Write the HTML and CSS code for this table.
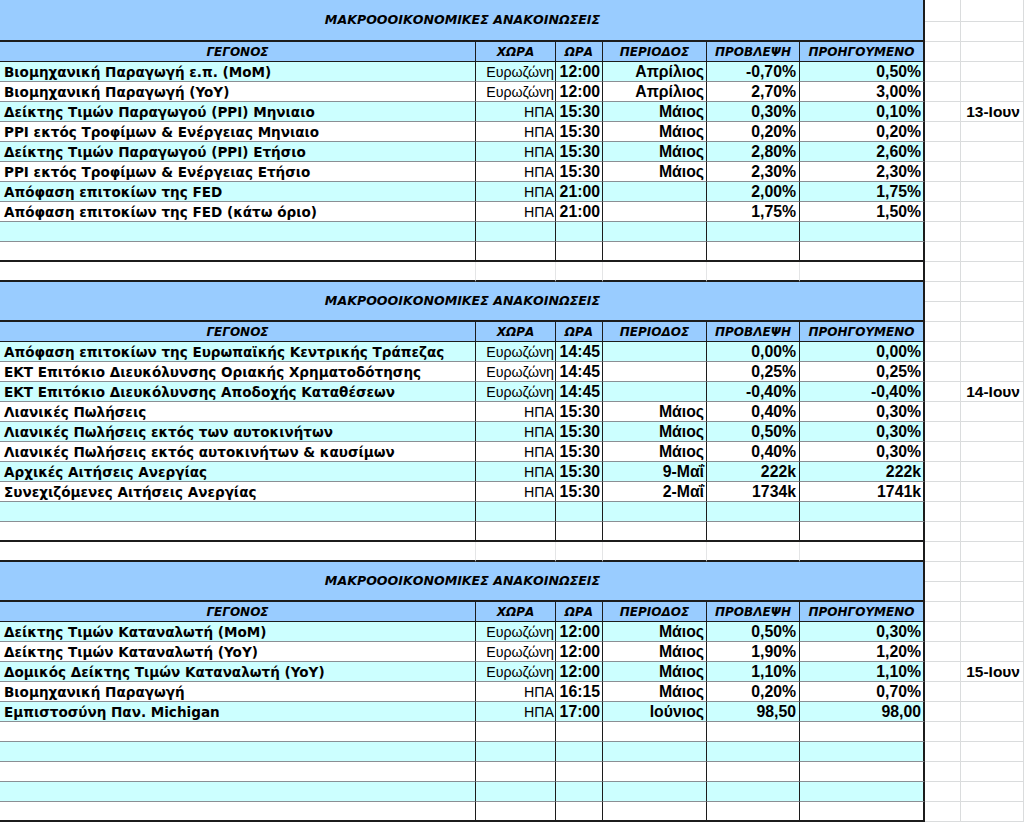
FILE: index.html
```html
<!DOCTYPE html>
<html lang="el">
<head>
<meta charset="utf-8">
<title>Μακροοικονομικές ανακοινώσεις</title>
<link rel="stylesheet" href="styles.css">
</head>
<body>
<table class="sheet">
<colgroup>
<col class="col-a"><col class="col-b"><col class="col-c"><col class="col-d"><col class="col-e"><col class="col-f"><col class="col-g"><col class="col-h">
</colgroup>
<tbody>
<!-- Block 1 -->
<tr class="row-first"><td class="title" colspan="6" rowspan="2">ΜΑΚΡΟΟΟΙΚΟΝΟΜΙΚΕΣ ΑΝΑΚΟΙΝΩΣΕΙΣ</td><td class="g"></td><td class="g"></td></tr>
<tr class="row"><td class="g"></td><td class="g"></td></tr>
<tr class="row head"><th>ΓΕΓΟΝΟΣ</th><th>ΧΩΡΑ</th><th>ΩΡΑ</th><th>ΠΕΡΙΟΔΟΣ</th><th>ΠΡΟΒΛΕΨΗ</th><th class="last">ΠΡΟΗΓΟΥΜΕΝΟ</th><td class="g"></td><td class="g"></td></tr>
<tr class="row cy"><td class="ev">Βιομηχανική Παραγωγή ε.π. (MoM)</td><td class="ct">Ευρωζώνη</td><td class="tm">12:00</td><td class="pr">Απρίλιος</td><td class="fc">-0,70%</td><td class="pv">0,50%</td><td class="g"></td><td class="g"></td></tr>
<tr class="row wh"><td class="ev">Βιομηχανική Παραγωγή (YoY)</td><td class="ct">Ευρωζώνη</td><td class="tm">12:00</td><td class="pr">Απρίλιος</td><td class="fc">2,70%</td><td class="pv">3,00%</td><td class="g"></td><td class="g"></td></tr>
<tr class="row cy"><td class="ev">Δείκτης Τιμών Παραγωγού (PPI) Μηνιαιο</td><td class="ct">ΗΠΑ</td><td class="tm">15:30</td><td class="pr">Μάιος</td><td class="fc">0,30%</td><td class="pv">0,10%</td><td class="g"></td><td class="g date">13-Ιουν</td></tr>
<tr class="row wh"><td class="ev">PPI εκτός Τροφίμων &amp; Ενέργειας Μηνιαιο</td><td class="ct">ΗΠΑ</td><td class="tm">15:30</td><td class="pr">Μάιος</td><td class="fc">0,20%</td><td class="pv">0,20%</td><td class="g"></td><td class="g"></td></tr>
<tr class="row cy"><td class="ev">Δείκτης Τιμών Παραγωγού (PPI) Ετήσιο</td><td class="ct">ΗΠΑ</td><td class="tm">15:30</td><td class="pr">Μάιος</td><td class="fc">2,80%</td><td class="pv">2,60%</td><td class="g"></td><td class="g"></td></tr>
<tr class="row wh"><td class="ev">PPI εκτός Τροφίμων &amp; Ενέργειας Ετήσιο</td><td class="ct">ΗΠΑ</td><td class="tm">15:30</td><td class="pr">Μάιος</td><td class="fc">2,30%</td><td class="pv">2,30%</td><td class="g"></td><td class="g"></td></tr>
<tr class="row cy"><td class="ev">Απόφαση επιτοκίων της FED</td><td class="ct">ΗΠΑ</td><td class="tm">21:00</td><td class="pr"></td><td class="fc">2,00%</td><td class="pv">1,75%</td><td class="g"></td><td class="g"></td></tr>
<tr class="row wh"><td class="ev">Απόφαση επιτοκίων της FED (κάτω όριο)</td><td class="ct">ΗΠΑ</td><td class="tm">21:00</td><td class="pr"></td><td class="fc">1,75%</td><td class="pv">1,50%</td><td class="g"></td><td class="g"></td></tr>
<tr class="row cy"><td class="ev"></td><td class="ct"></td><td class="tm"></td><td class="pr"></td><td class="fc"></td><td class="pv"></td><td class="g"></td><td class="g"></td></tr>
<tr class="row wh end"><td class="ev"></td><td class="ct"></td><td class="tm"></td><td class="pr"></td><td class="fc"></td><td class="pv"></td><td class="g"></td><td class="g"></td></tr>
<tr class="row gap"><td class="gb"></td><td class="gb"></td><td class="gb"></td><td class="gb"></td><td class="gb"></td><td class="gb"></td><td class="g"></td><td class="g"></td></tr>

<!-- Block 2 -->
<tr class="row"><td class="title" colspan="6" rowspan="2">ΜΑΚΡΟΟΟΙΚΟΝΟΜΙΚΕΣ ΑΝΑΚΟΙΝΩΣΕΙΣ</td><td class="g"></td><td class="g"></td></tr>
<tr class="row"><td class="g"></td><td class="g"></td></tr>
<tr class="row head"><th>ΓΕΓΟΝΟΣ</th><th>ΧΩΡΑ</th><th>ΩΡΑ</th><th>ΠΕΡΙΟΔΟΣ</th><th>ΠΡΟΒΛΕΨΗ</th><th class="last">ΠΡΟΗΓΟΥΜΕΝΟ</th><td class="g"></td><td class="g"></td></tr>
<tr class="row cy"><td class="ev">Απόφαση επιτοκίων της Ευρωπαϊκής Κεντρικής Τράπεζας</td><td class="ct">Ευρωζώνη</td><td class="tm">14:45</td><td class="pr"></td><td class="fc">0,00%</td><td class="pv">0,00%</td><td class="g"></td><td class="g"></td></tr>
<tr class="row wh"><td class="ev">ΕΚΤ Επιτόκιο Διευκόλυνσης Οριακής Χρηματοδότησης</td><td class="ct">Ευρωζώνη</td><td class="tm">14:45</td><td class="pr"></td><td class="fc">0,25%</td><td class="pv">0,25%</td><td class="g"></td><td class="g"></td></tr>
<tr class="row cy"><td class="ev">ΕΚΤ Επιτόκιο Διευκόλυνσης Αποδοχής Καταθέσεων</td><td class="ct">Ευρωζώνη</td><td class="tm">14:45</td><td class="pr"></td><td class="fc">-0,40%</td><td class="pv">-0,40%</td><td class="g"></td><td class="g date">14-Ιουν</td></tr>
<tr class="row wh"><td class="ev">Λιανικές Πωλήσεις</td><td class="ct">ΗΠΑ</td><td class="tm">15:30</td><td class="pr">Μάιος</td><td class="fc">0,40%</td><td class="pv">0,30%</td><td class="g"></td><td class="g"></td></tr>
<tr class="row cy"><td class="ev">Λιανικές Πωλήσεις εκτός των αυτοκινήτων</td><td class="ct">ΗΠΑ</td><td class="tm">15:30</td><td class="pr">Μάιος</td><td class="fc">0,50%</td><td class="pv">0,30%</td><td class="g"></td><td class="g"></td></tr>
<tr class="row wh"><td class="ev">Λιανικές Πωλήσεις εκτός αυτοκινήτων &amp; καυσίμων</td><td class="ct">ΗΠΑ</td><td class="tm">15:30</td><td class="pr">Μάιος</td><td class="fc">0,40%</td><td class="pv">0,30%</td><td class="g"></td><td class="g"></td></tr>
<tr class="row cy"><td class="ev">Αρχικές Αιτήσεις Ανεργίας</td><td class="ct">ΗΠΑ</td><td class="tm">15:30</td><td class="pr">9-Μαΐ</td><td class="fc">222k</td><td class="pv">222k</td><td class="g"></td><td class="g"></td></tr>
<tr class="row wh"><td class="ev">Συνεχιζόμενες Αιτήσεις Ανεργίας</td><td class="ct">ΗΠΑ</td><td class="tm">15:30</td><td class="pr">2-Μαΐ</td><td class="fc">1734k</td><td class="pv">1741k</td><td class="g"></td><td class="g"></td></tr>
<tr class="row cy"><td class="ev"></td><td class="ct"></td><td class="tm"></td><td class="pr"></td><td class="fc"></td><td class="pv"></td><td class="g"></td><td class="g"></td></tr>
<tr class="row wh end"><td class="ev"></td><td class="ct"></td><td class="tm"></td><td class="pr"></td><td class="fc"></td><td class="pv"></td><td class="g"></td><td class="g"></td></tr>
<tr class="row gap"><td class="gb"></td><td class="gb"></td><td class="gb"></td><td class="gb"></td><td class="gb"></td><td class="gb"></td><td class="g"></td><td class="g"></td></tr>

<!-- Block 3 -->
<tr class="row"><td class="title" colspan="6" rowspan="2">ΜΑΚΡΟΟΟΙΚΟΝΟΜΙΚΕΣ ΑΝΑΚΟΙΝΩΣΕΙΣ</td><td class="g"></td><td class="g"></td></tr>
<tr class="row"><td class="g"></td><td class="g"></td></tr>
<tr class="row head"><th>ΓΕΓΟΝΟΣ</th><th>ΧΩΡΑ</th><th>ΩΡΑ</th><th>ΠΕΡΙΟΔΟΣ</th><th>ΠΡΟΒΛΕΨΗ</th><th class="last">ΠΡΟΗΓΟΥΜΕΝΟ</th><td class="g"></td><td class="g"></td></tr>
<tr class="row cy"><td class="ev">Δείκτης Τιμών Καταναλωτή (MoM)</td><td class="ct">Ευρωζώνη</td><td class="tm">12:00</td><td class="pr">Μάιος</td><td class="fc">0,50%</td><td class="pv">0,30%</td><td class="g"></td><td class="g"></td></tr>
<tr class="row wh"><td class="ev">Δείκτης Τιμών Καταναλωτή (YoY)</td><td class="ct">Ευρωζώνη</td><td class="tm">12:00</td><td class="pr">Μάιος</td><td class="fc">1,90%</td><td class="pv">1,20%</td><td class="g"></td><td class="g"></td></tr>
<tr class="row cy"><td class="ev">Δομικός Δείκτης Τιμών Καταναλωτή (YoY)</td><td class="ct">Ευρωζώνη</td><td class="tm">12:00</td><td class="pr">Μάιος</td><td class="fc">1,10%</td><td class="pv">1,10%</td><td class="g"></td><td class="g date">15-Ιουν</td></tr>
<tr class="row wh"><td class="ev">Βιομηχανική Παραγωγή</td><td class="ct">ΗΠΑ</td><td class="tm">16:15</td><td class="pr">Μάιος</td><td class="fc">0,20%</td><td class="pv">0,70%</td><td class="g"></td><td class="g"></td></tr>
<tr class="row cy"><td class="ev">Εμπιστοσύνη Παν. Michigan</td><td class="ct">ΗΠΑ</td><td class="tm">17:00</td><td class="pr">Ιούνιος</td><td class="fc">98,50</td><td class="pv">98,00</td><td class="g"></td><td class="g"></td></tr>
<tr class="row wh"><td class="ev"></td><td class="ct"></td><td class="tm"></td><td class="pr"></td><td class="fc"></td><td class="pv"></td><td class="g"></td><td class="g"></td></tr>
<tr class="row cy"><td class="ev"></td><td class="ct"></td><td class="tm"></td><td class="pr"></td><td class="fc"></td><td class="pv"></td><td class="g"></td><td class="g"></td></tr>
<tr class="row wh"><td class="ev"></td><td class="ct"></td><td class="tm"></td><td class="pr"></td><td class="fc"></td><td class="pv"></td><td class="g"></td><td class="g"></td></tr>
<tr class="row cy"><td class="ev"></td><td class="ct"></td><td class="tm"></td><td class="pr"></td><td class="fc"></td><td class="pv"></td><td class="g"></td><td class="g"></td></tr>
<tr class="row wh end"><td class="ev"></td><td class="ct"></td><td class="tm"></td><td class="pr"></td><td class="fc"></td><td class="pv"></td><td class="g"></td><td class="g"></td></tr>
</tbody>
</table>
</body>
</html>
```
FILE: styles.css
```css
html, body {
  margin: 0;
  padding: 0;
  background: #ffffff;
}

.sheet {
  border-collapse: separate;
  border-spacing: 0;
  table-layout: fixed;
  width: 1024px;
  color: #000;
  font-family: "Liberation Sans", Arial, sans-serif;
}

.col-a { width: 476px; }
.col-b { width: 80px; }
.col-c { width: 47px; }
.col-d { width: 104px; }
.col-e { width: 93px; }
.col-f { width: 125px; }
.col-g { width: 36px; }
.col-h { width: 63px; }

.sheet td, .sheet th {
  box-sizing: border-box;
  padding: 0 3px;
  white-space: nowrap;
  overflow: hidden;
  vertical-align: bottom;
  line-height: 18px;
}

.row { height: 20px; }
.row-first { height: 22px; }
.gap { height: 20px; }

/* empty spreadsheet grid cells */
.sheet .g {
  border-right: 1px solid #dadcdd;
  border-bottom: 1px solid #dadcdd;
}
.sheet .gb {
  border-right: 1px solid #e4e5e6;
  border-bottom: 2px solid #1c1c1c;
}
.sheet .gap .gb:nth-child(6) {
  border-right: 2px solid #1c1c1c;
}

.sheet .date {
  text-align: right;
  font-weight: bold;
  font-size: 15.5px;
  padding-right: 3px;
}

/* title */
.sheet .title {
  background: #99ccff;
  border-right: 2px solid #1c1c1c;
  border-bottom: 2px solid #1c1c1c;
  text-align: center;
  vertical-align: middle;
  font-family: "DejaVu Sans", Verdana, sans-serif;
  font-weight: bold;
  font-style: italic;
  font-size: 12.6px;
  padding: 0 0 0 2px;
}

/* header row */
.sheet .head th {
  background: #99ccff;
  border-right: 1px solid #1c1c1c;
  border-bottom: 1px solid #1c1c1c;
  font-family: "DejaVu Sans", Verdana, sans-serif;
  font-weight: bold;
  font-style: italic;
  font-size: 12px;
  text-align: center;
  padding: 0;
}
.sheet .head th.last { border-right: 2px solid #1c1c1c; }

/* data rows */
.cy td:not(.g) { background: #ccffff; }
.wh td:not(.g) { background: #ffffff; }

.sheet .ev, .sheet .ct, .sheet .tm, .sheet .pr, .sheet .fc, .sheet .pv {
  border-right: 1px solid #1c1c1c;
  border-bottom: 1px solid #8a8f94;
}
.sheet .pv { border-right: 2px solid #1c1c1c; }
.sheet .end td:not(.g) { border-bottom: 2px solid #1c1c1c; }

.sheet .ev {
  font-family: "DejaVu Sans", Verdana, sans-serif;
  font-weight: bold;
  font-size: 13.55px;
  padding-left: 4px;
}
.sheet .ct {
  text-align: right;
  font-size: 14.2px;
  padding-right: 1px;
}
.sheet .tm, .sheet .pr, .sheet .fc, .sheet .pv {
  text-align: right;
  font-weight: bold;
  font-size: 15.8px;
}
.sheet .tm { padding-right: 2px; }
.sheet .pr { padding-right: 2px; }
.sheet .fc { padding-right: 3px; }
.sheet .pv { padding-right: 2px; }
```
